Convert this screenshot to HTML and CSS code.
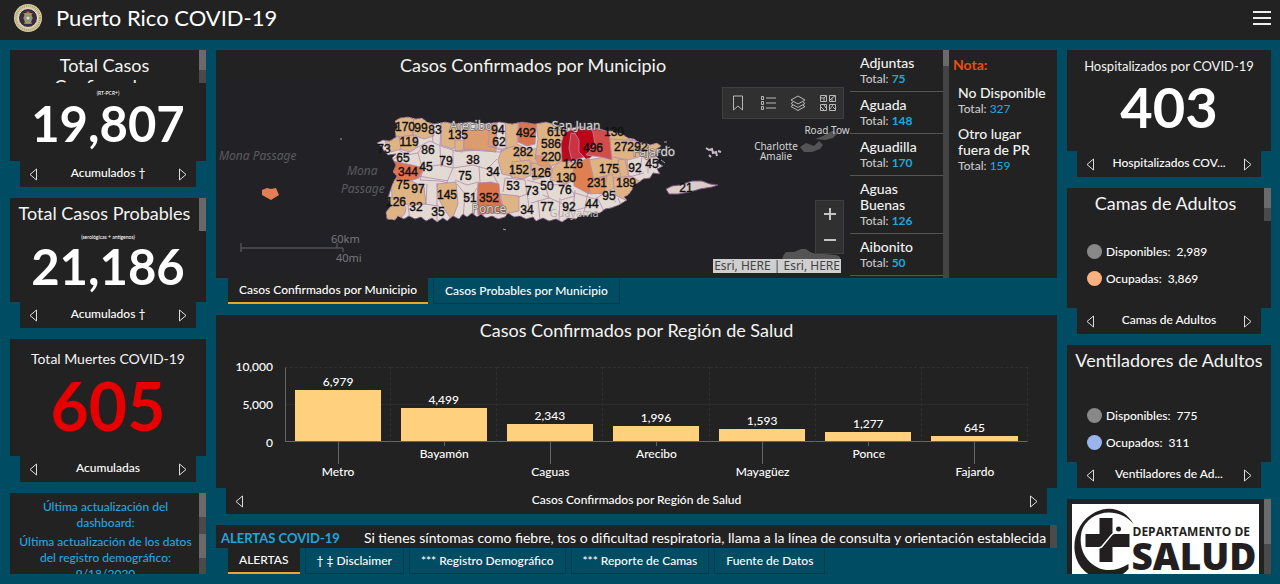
FILE: index.html
```html
<!DOCTYPE html>
<html lang="es">
<head>
<meta charset="utf-8">
<title>Puerto Rico COVID-19</title>
<link rel="stylesheet" href="styles.css">
</head>
<body>
<header class="topbar">
  <svg class="seal" viewBox="0 0 28 28" aria-hidden="true">
    <circle cx="14" cy="14" r="14" fill="#d8cd9e"/>
    <circle cx="14" cy="14" r="12" fill="none" stroke="#a39a76" stroke-width="2" stroke-dasharray="1 1"/>
    <circle cx="14" cy="14" r="9.5" fill="#352c48" stroke="#e6e0c4"/>
    <path d="M9 9l2 2-2 3 2 3-1 3h8l-1-3 2-3-2-3 2-2-3 0-2-2-2 2z" fill="#b5713f"/>
    <path d="M11 10h6v7q-3 4-6 0z" fill="#6f9c84" stroke="#c9a65c" stroke-width=".8"/>
    <circle cx="14" cy="14" r="1.5" fill="#e5ded0"/>
  </svg>
  <h1 class="topbar-title">Puerto Rico COVID-19</h1>
  <button class="menu" type="button" aria-label="Menú"><span></span><span></span><span></span></button>
</header>

<main class="board">
  <div class="stack">
    <section class="widget w-cases">
      <div class="panel">
        <div class="head scrolls"><h2 class="title">Total Casos Confirmados</h2><i class="bar"><b class="thumb"></b></i></div>
        <div class="tiny">(RT-PCR+)</div>
        <div class="figure">19,807</div>
      </div>
      <nav class="pager"><button type="button" aria-label="Anterior"><svg viewBox="0 0 9 13"><path d="M7.500 1v11L1 6.500z"/></svg></button><span>Acumulados †</span><button type="button" aria-label="Siguiente"><svg viewBox="0 0 9 13"><path d="M1.500 1v11L8 6.500z"/></svg></button></nav>
    </section>
    <section class="widget w-probable">
      <div class="panel">
        <div class="head scrolls"><h2 class="title">Total Casos Probables</h2><i class="bar"></i></div>
        <div class="tiny">(serológicas + antígenos)</div>
        <div class="figure">21,186</div>
      </div>
      <nav class="pager"><button type="button" aria-label="Anterior"><svg viewBox="0 0 9 13"><path d="M7.500 1v11L1 6.500z"/></svg></button><span>Acumulados †</span><button type="button" aria-label="Siguiente"><svg viewBox="0 0 9 13"><path d="M1.500 1v11L8 6.500z"/></svg></button></nav>
    </section>
    <section class="widget w-deaths">
      <div class="panel">
        <h2 class="title medium">Total Muertes COVID-19</h2>
        <div class="figure deaths">605</div>
      </div>
      <nav class="pager"><button type="button" aria-label="Anterior"><svg viewBox="0 0 9 13"><path d="M7.500 1v11L1 6.500z"/></svg></button><span>Acumuladas</span><button type="button" aria-label="Siguiente"><svg viewBox="0 0 9 13"><path d="M1.500 1v11L8 6.500z"/></svg></button></nav>
    </section>
    <section class="widget w-update">
      <div class="panel scrolls update">
        <div class="update-text">
          <p>Última actualización del dashboard:</p>
          <p>Última actualización de los datos del registro demográfico: 9/18/2020</p>
        </div>
        <i class="bar two"><b class="thumb"></b><b class="thumb"></b></i>
      </div>
    </section>
  </div>

  <div class="stack">
    <section class="widget w-map">
      <div class="panel mapcard">
        <div class="mapside">
          <h2 class="title maptitle">Casos Confirmados por Municipio</h2>
          <div class="map">
            <svg class="mapsvg" viewBox="216 80 634 198" preserveAspectRatio="xMidYMid slice" role="img" aria-label="Mapa de Puerto Rico">
              <defs>
                <clipPath id="isla"><path id="costa" d="M395 121L400 118L408 117L416 119L422 118L427 122L434 124L445 122L455 124L470 122L480 124L492 123L500 122L512 124L522 122L535 124L546 122L556 125L565 127L572 128L580 126L590 129L598 128L606 131L612 131L622 134L628 138L634 139L640 143L645 142L650 145L657 143L661 146L657 149L660 152L655 155L659 159L656 162L663 166L657 169L660 174L653 173L650 178L643 179L638 183L634 184L632 190L628 195L624 197L627 200L619 205L611 208L605 209L600 213L591 213L588 216L580 215L576 219L568 218L562 222L556 219L549 221L543 218L536 221L533 217L526 219L520 216L514 217L508 213L505 217L498 219L492 216L486 218L481 214L477 217L472 213L467 217L463 214L459 219L453 216L447 221L443 218L437 222L432 218L426 221L421 217L415 219L409 216L404 219L398 216L395 220L387 219L386 212L391 206L388 198L391 188L394 181L397 176L393 172L396 165L392 158L396 154L388 155L384 151L382 147L377 143L383 140L390 141L396 137L395 131L398 127Z"/></clipPath>
              </defs>
              <g fill="#545457">
                <path d="M800 147l6-4 8 3 5-5 4 4-3 4-8 3-8 0z"/><path d="M815 139l8-3 9-5 6 2-5 5-8 2z"/>
                <path d="M783 256l3-4 8 0 7-3 5 0 4 3 6 2 8 0 12 1 4 2v4h-58z"/>
              </g>
              <g clip-path="url(#isla)" stroke="#b08ab0" stroke-width=".8" stroke-linejoin="round">
                <rect x="370" y="110" width="300" height="115" fill="#e4dad4"/>
                <g fill="#dfb485">
                  <path d="M390 114h24l-1 21-12 2-7-2z"/><path d="M414 114h17l3 22-10 3-11-4z"/>
                  <path d="M399 137l14-2 5 12-8 5-11-3z"/><path d="M385 142l14-6 2 13-10 3z"/>
                  <path d="M442 114h20l-2 27-7 8-12-4z"/><path d="M455 140h9l-1 12-8-1z"/>
                  <path d="M505 114h14l-2 30 12 6 15-3 6 12-5 8-30-3-9-15z"/>
                  <path d="M502 149l13-3 6 16-5 15-14-3-4-14z"/><path d="M512 162l18-2 1 15-8 4-12-2z"/><path d="M531 163l20 2 2 10-20 5z"/>
                  <path d="M535 114h31l-3 46-14 8-14-9 3-20z"/>
                  <path d="M561 161l15 2 2 15-12 6-16-4 3-12z"/>
                  <path d="M605 125l32 5-5 11-23 1z"/><path d="M610 139l29 2 3 15-14 4-18-2z"/><path d="M589 160l20-4 18 4-5 20-25 2-9-9z"/><path d="M618 160l9-1 2 18-8 3z"/>
                  <path d="M590 180l22-6 4 13-14 7-15-2z"/><path d="M613 178l18-2 10 6-11 20-15-7z"/><path d="M638 138l25 3-3 15-14 3-7-5z"/>
                  <path d="M391 179l18 1 15 7 2 17-16 2-18-8z"/><path d="M382 197l19 1 5 10-1 5-9 11h-14z"/>
                  <path d="M437 184l19-2 2 22-6 16-8-11-6-12z"/><path d="M500 194l19 2v15l-14 3z"/>
                </g>
                <path d="M464 131l13-2 20-6-1 29-14-2-18 1z" fill="#db9c70"/>
                <path d="M519 114h18l-2 30-8 2-9-4z" fill="#d97650"/>
                <path d="M387 158l6 3 19 4 12 3-5 10-9 3-18-2z" fill="#dc7450"/>
                <path d="M478 183l13-1 8 2 1 14 5 16-14-1-13 2-1-16z" fill="#d8764e"/>
                <path d="M535 155l10 2 7 12-14-4z" fill="#e09965"/>
                <path d="M564 133l7-3 6 2 1 28-16 2-1-18z" fill="#b90b1c"/>
                <path d="M571 133l9 2 5 22-13 4-3-13z" fill="#cc3340"/>
                <path d="M573 130l12-3 10 5 1 21-9 7-8-8 0-12z" fill="#bd0518"/>
                <path d="M592 127l17 5 3 28-11-3-15-2 9-11z" fill="#d24d4a"/>
                <path d="M576 163l13-5 5 22-5 14-15-8-1-14z" fill="#e08050"/>
                <path d="M590 179l17-3-3 17-14 1z" fill="#e39a67"/>
                <g fill="none">
                  <path d="M431 120l2 22M441 122l-1 25M418 147l12-6 13 6 13 4 12-2 14 2 18 1 8-4"/>
                  <path d="M399 150l8 5 11-2 4-7M418 153l4 14 18-2 13 3M440 147l1 20M400 155l-11 7M424 167l-4 13 20 1 8 2M453 150l0 18-6 14M453 168l20-3 14 4 10-10M455 180l12 5 12-3M479 166l1 17M490 168l8 16M490 123l-2 23 16 5"/>
                  <path d="M418 176l30 5M427 184l-1 20M437 183v38M408 206l2 14M425 204l14 2M457 184l8 10-2 24M477 188l-6 10-7 1M505 178l-2 14M505 178l20 2 2 14-8 3M527 192l2 16M527 180l18 5 4 13-18 5M549 185l19-1 7 12-14 4M538 200l2 20M560 198l-1 22M575 190l-2 20M588 192l-4 20M575 193l20 6 10-6M597 197l8 16M604 193l12 9M618 198l4 10M625 160l4 17 15-4M642 157l-3 18M648 158l0 15M543 195l18 8 12 8 14-4M490 146l12 3"/>
                </g>
              </g>
              <use href="#costa" fill="none" stroke="#7e5b86" stroke-width="1" stroke-dasharray="3 1"/>
              <g fill="#d9cdc7" stroke="#7d5485" stroke-width="1">
                <path d="M666 189l6-3 8-1 12-4 10 0 8 3 8 1-6 2-12 2-10 3-12 2-9 0z"/>
                <path d="M706 148l3 2 3-1 1 4 3-1 1 4M718 151l3 1M709 155l2 2" fill="none" stroke="#cbb9c7" stroke-width="2"/>
                <path d="M664 142l3 0M667 148l3-1M661 160l4 3M503 229l3 1M340 139h2" fill="none" stroke="#b39bb0"/>
              </g>
              <path d="M262 190l5-2 4 1 5-1 3 7-8 5-9-5z" fill="#e37d55"/>
              <g class="sea"><text x="219" y="160">Mona Passage</text><text x="347" y="175">Mona</text><text x="341" y="193">Passage</text></g>
              <path d="M241 243v9M241 248h102M337 243v5M343 248v4" fill="none" stroke="#656568"/>
              <g class="scale"><text x="331" y="243">60km</text><text x="336" y="262">40mi</text></g>
              <g class="place"><text x="471" y="130">Arecibo</text><text x="576" y="130">San Juan</text><text x="489" y="213">Ponce</text><text class="faint" x="574" y="217">Guayama</text><text x="654" y="156">Fajardo</text></g>
              <g class="place small"><text x="776" y="150">Charlotte</text><text x="776" y="160">Amalie</text><text x="827" y="134">Road Tow</text></g>
              <g class="count">
                <text x="405" y="131">170</text><text x="421" y="132">99</text><text x="435" y="134">83</text><text x="409" y="146">119</text><text x="428" y="154">86</text><text x="384" y="153">73</text><text x="403" y="162">65</text><text x="408" y="176">344</text><text x="426" y="171">45</text><text x="446" y="165">79</text><text x="458" y="139">135</text><text x="498" y="134">94</text><text x="499" y="146">62</text><text x="526" y="137">492</text><text x="523" y="156">282</text><text x="473" y="164">38</text><text x="493" y="176">34</text><text x="465" y="180">75</text><text x="519" y="174">152</text><text x="541" y="177">126</text><text x="403" y="189">75</text><text x="418" y="193">97</text><text x="447" y="199">145</text><text x="470" y="202">51</text><text x="489" y="202">352</text><text x="513" y="190">53</text><text x="532" y="195">73</text><text x="547" y="190">50</text><text x="396" y="206">126</text><text x="416" y="211">32</text><text x="438" y="216">35</text><text x="527" y="214">34</text><text x="547" y="211">77</text><text x="569" y="211">92</text><text x="592" y="208">44</text><text x="609" y="200">95</text><text x="557" y="136">616</text><text x="551" y="148">586</text><text x="551" y="161">220</text><text x="573" y="168">126</text><text x="593" y="152">496</text><text x="614" y="136">130</text><text x="624" y="151">272</text><text x="641" y="151">92</text><text x="609" y="173">175</text><text x="635" y="172">92</text><text x="652" y="168">45</text><text x="566" y="182">130</text><text x="597" y="187">231</text><text x="626" y="187">189</text><text x="565" y="194">76</text><text x="686" y="192">21</text>
              </g>
            </svg>
            <div class="tools">
              <button type="button" aria-label="Marcadores"><svg viewBox="0 0 16 16"><path d="M3.500 1h9v14L8 11l-4.500 4z"/></svg></button>
              <button type="button" aria-label="Leyenda"><svg viewBox="0 0 16 16"><path d="M6 3h10M6 8h10M6 13h10M1.500 1.500h2v3h-2zM1.500 6.500h2v3h-2zM1.500 11.500h2v3h-2z"/></svg></button>
              <button type="button" aria-label="Capas"><svg viewBox="0 0 16 16"><path d="M8 1l7 4-7 4-7-4zM3 7.300L1 8.500l7 4 7-4-2-1.200M3 10.300l-2 1.200 7 4 7-4-2-1.200"/></svg></button>
              <button type="button" aria-label="Mapas base"><svg viewBox="0 0 16 16"><path d="M.5.5h6v6h-6zM9.500.5h6v6h-6zM.5 9.500h6v6h-6zM9.500 9.500h6v6h-6zM1 3l3 0 0 3M6 1L4 3M10 5l2-2 3-2M12 3v3M1 12l3 3M4 10l2 3M10 14l3-4M13 12l2 2"/></svg></button>
            </div>
            <div class="zoom"><button type="button" aria-label="Acercar"><svg viewBox="0 0 14 14"><path d="M7 1v12M1 7h12"/></svg></button><button type="button" aria-label="Alejar"><svg viewBox="0 0 14 14"><path d="M1 7h12"/></svg></button></div>
            <div class="credit">Esri, HERE | Esri, HERE</div>
          </div>
        </div>
        <div class="towns">
          <ul>
            <li><h3>Adjuntas</h3><p>Total: <b>75</b></p></li>
            <li><h3>Aguada</h3><p>Total: <b>148</b></p></li>
            <li><h3>Aguadilla</h3><p>Total: <b>170</b></p></li>
            <li><h3>Aguas Buenas</h3><p>Total: <b>126</b></p></li>
            <li><h3>Aibonito</h3><p>Total: <b>50</b></p></li>
          </ul>
          <i class="track"><b class="thumb"></b></i>
        </div>
        <div class="notes">
          <h3 class="nota">Nota:</h3>
          <ul>
            <li><h3>No Disponible</h3><p>Total: <em>327</em></p></li>
            <li><h3>Otro lugar fuera de PR</h3><p>Total: <em>159</em></p></li>
          </ul>
        </div>
      </div>
      <nav class="tabs"><button class="on" type="button">Casos Confirmados por Municipio</button><button type="button">Casos Probables por Municipio</button></nav>
    </section>

    <section class="widget w-chart">
      <div class="panel chartcard">
        <h2 class="title">Casos Confirmados por Región de Salud</h2>
        <div class="chart">
          <div class="yaxis"><span>10,000</span><span>5,000</span><span>0</span></div>
          <div class="plot">
            <div class="col"><div class="well"><span>6,979</span><div class="fill" style="height:69.79%"></div></div><div class="cat">Metro</div></div>
            <div class="col"><div class="well"><span>4,499</span><div class="fill" style="height:44.99%"></div></div><div class="cat">Bayamón</div></div>
            <div class="col"><div class="well"><span>2,343</span><div class="fill" style="height:23.43%"></div></div><div class="cat">Caguas</div></div>
            <div class="col"><div class="well"><span>1,996</span><div class="fill" style="height:19.96%"></div></div><div class="cat">Arecibo</div></div>
            <div class="col"><div class="well"><span>1,593</span><div class="fill" style="height:15.93%"></div></div><div class="cat">Mayagüez</div></div>
            <div class="col"><div class="well"><span>1,277</span><div class="fill" style="height:12.77%"></div></div><div class="cat">Ponce</div></div>
            <div class="col"><div class="well"><span>645</span><div class="fill" style="height:6.45%"></div></div><div class="cat">Fajardo</div></div>
          </div>
        </div>
      </div>
      <nav class="pager"><button type="button" aria-label="Anterior"><svg viewBox="0 0 9 13"><path d="M7.500 1v11L1 6.500z"/></svg></button><span>Casos Confirmados por Región de Salud</span><button type="button" aria-label="Siguiente"><svg viewBox="0 0 9 13"><path d="M1.500 1v11L8 6.500z"/></svg></button></nav>
    </section>

    <section class="widget w-alert">
      <div class="panel scrolls alert"><strong>ALERTAS COVID-19</strong><span>Si tienes síntomas como fiebre, tos o dificultad respiratoria, llama a la línea de consulta y orientación establecida</span><i class="bar"></i></div>
      <nav class="tabs"><button class="on" type="button">ALERTAS</button><button type="button">† ‡ Disclaimer</button><button type="button">*** Registro Demográfico</button><button type="button">*** Reporte de Camas</button><button type="button">Fuente de Datos</button></nav>
    </section>
  </div>

  <div class="stack">
    <section class="widget w-hospital">
      <div class="panel">
        <h2 class="title little">Hospitalizados por COVID-19</h2>
        <div class="figure hospital">403</div>
      </div>
      <nav class="pager"><button type="button" aria-label="Anterior"><svg viewBox="0 0 9 13"><path d="M7.500 1v11L1 6.500z"/></svg></button><span>Hospitalizados COV...</span><button type="button" aria-label="Siguiente"><svg viewBox="0 0 9 13"><path d="M1.500 1v11L8 6.500z"/></svg></button></nav>
    </section>
    <section class="widget w-beds">
      <div class="panel">
        <div class="head scrolls"><h2 class="title">Camas de Adultos</h2><i class="bar"><b class="thumb"></b></i></div>
        <ul class="legend"><li><i class="dot"></i>Disponibles:&ensp;2,989</li><li><i class="dot peach"></i>Ocupadas:&ensp;3,869</li></ul>
      </div>
      <nav class="pager"><button type="button" aria-label="Anterior"><svg viewBox="0 0 9 13"><path d="M7.500 1v11L1 6.500z"/></svg></button><span>Camas de Adultos</span><button type="button" aria-label="Siguiente"><svg viewBox="0 0 9 13"><path d="M1.500 1v11L8 6.500z"/></svg></button></nav>
    </section>
    <section class="widget w-vents">
      <div class="panel">
        <div class="head"><h2 class="title">Ventiladores de Adultos</h2></div>
        <ul class="legend"><li><i class="dot"></i>Disponibles:&ensp;775</li><li><i class="dot blue"></i>Ocupados:&ensp;311</li></ul>
      </div>
      <nav class="pager"><button type="button" aria-label="Anterior"><svg viewBox="0 0 9 13"><path d="M7.500 1v11L1 6.500z"/></svg></button><span>Ventiladores de Ad...</span><button type="button" aria-label="Siguiente"><svg viewBox="0 0 9 13"><path d="M1.500 1v11L8 6.500z"/></svg></button></nav>
    </section>
    <section class="widget w-logo">
      <div class="panel scrolls logo">
        <svg viewBox="0 0 188 70" preserveAspectRatio="xMidYMin slice" role="img" aria-label="Departamento de Salud">
          <rect width="188" height="90" fill="#fff"/>
          <path d="M62 20C54 5 38 1 24 8C6 17-1 38 5 55C9 66 18 73 30 75C42 77 52 71 57 65V60C48 66 36 68 27 64C12 57 7 42 10 28C15 8 45 0 62 20z" fill="#231f20"/>
          <path d="M28 14h13v16h17v13H41v15H28V43H14V30h14z" fill="#231f20"/>
          <path d="M16 48L30 43 40 31 47 26" fill="none" stroke="#fff" stroke-width="1.500"/>
          <circle cx="47" cy="25" r="2.500" fill="#231f20"/>
          <text class="dep" x="61" y="32">DEPARTAMENTO DE</text>
          <text class="salud" x="60" y="66">SALUD</text>
        </svg>
        <i class="bar"><b class="thumb"></b></i>
      </div>
    </section>
  </div>
</main>
</body>
</html>
```

FILE: styles.css
```css
* { box-sizing: border-box; }
body {
  margin: 0;
  height: 100vh;
  min-height: 560px;
  display: flex;
  flex-direction: column;
  background: #004c63;
  color: #fff;
  font: 500 12px/16px Lato, "Open Sans", sans-serif;
}
h1, h2, h3, p, ul { margin: 0; padding: 0; font-weight: 500; list-style: none; }
h1, .title { font-weight: 400; }
button { font: inherit; color: inherit; background: none; border: 0; padding: 0; cursor: pointer; }

.topbar { display: flex; align-items: center; height: 40px; flex: none; padding: 0 9px 4px 14px; background: #222; }
.seal { width: 28px; height: 28px; }
.topbar-title { flex: 1; margin-left: 14px; font-size: 22px; line-height: 28px; }
.menu { display: grid; gap: 4px; width: 18px; }
.menu span { height: 2px; background: #eee; }

.board { flex: 1; min-height: 0; display: grid; grid-template-columns: 196px minmax(0, 1fr) 204px; gap: 10px; padding: 10px 9px 10px 10px; }
.stack { display: flex; flex-direction: column; gap: 11px; min-height: 0; min-width: 0; }
.widget { display: flex; flex-direction: column; min-height: 0; flex: 1 1 0; }
.w-cases { flex-grow: 137; }
.w-probable { flex-grow: 130; }
.w-deaths { flex-grow: 143; }
.w-update { flex-grow: 81; }
.w-map { flex-grow: 254; }
.w-chart { flex-grow: 199; }
.w-alert { flex-grow: 49; }
.w-hospital { flex-grow: 127; }
.w-beds { flex-grow: 146; }
.w-vents { flex-grow: 143; }
.w-logo { flex-grow: 75; }

.panel { flex: 1; min-height: 0; overflow: hidden; background: #222; text-align: center; }
.title { font-size: 18px; line-height: 21px; color: #f4f4f4; }
.title.medium { font-size: 14px; padding-top: 9px; }
.title.little { font-size: 13px; padding-top: 6px; }
.head { height: 33px; overflow: hidden; padding: 5px 7px 0; }
.head.scrolls { padding-right: 14px; }
.scrolls { position: relative; }
.bar { position: absolute; top: 0; right: 0; width: 7px; height: 100%; background: #4a4a4a; }
.thumb { display: block; height: 60%; background: #6a6a6a; }
.w-probable .bar { background: #686868; }
.tiny { height: 15px; padding-top: 5px; font-size: 5px; line-height: 10px; }
.w-probable .tiny { height: 10px; padding-top: 1px; }
.figure { font-size: 49px; line-height: 50px; font-weight: 700; }
.figure.deaths { font-size: 66px; line-height: 74px; color: #e60000; }
.figure.hospital { font-size: 56px; line-height: 60px; }

.pager { display: flex; align-items: center; justify-content: space-between; height: 26px; flex: none; margin: 0 10px; padding: 0 9px; background: #222; }
.pager span { padding-bottom: 3px; }
.pager svg { display: block; width: 9px; height: 13px; fill: none; stroke: #ddd; }

.update-text { padding: 6px 14px 0 9px; color: #22a7e0; }
.update-text p + p { margin-top: 3px; }
.bar.two { display: grid; grid-template-rows: 1fr 1fr; }

.mapcard { display: flex; }
.mapside { flex: 1; min-width: 0; display: flex; flex-direction: column; }
.maptitle { height: 30px; padding-top: 5px; flex: none; }
.map { position: relative; flex: 1; min-height: 0; background: #222226; }
.mapsvg { display: block; width: 100%; height: 100%; }
.sea { font: italic 12px "Noto Sans", sans-serif; fill: #5a5a5e; }
.scale { font: 11px "Noto Sans", sans-serif; fill: #77777a; }
.place { font: 12px "Noto Sans", sans-serif; text-anchor: middle; fill: #d4d4d4; paint-order: stroke; stroke: #555; stroke-width: 1px; }
.faint { fill: #b5b0ae; font-size: 11px; stroke: none; }
.place.small { font-size: 10px; stroke: none; }
.count { font: 12px "Liberation Sans", Arial, sans-serif; text-anchor: middle; fill: #111; stroke: #111; stroke-width: .4px; }
.tools { position: absolute; top: 7px; right: 6px; display: flex; height: 32px; background: #303030; border: 1px solid #3f3f3f; }
.tools button { display: grid; place-items: center; width: 30px; }
.tools svg { width: 16px; height: 16px; fill: none; stroke: #b8b8b8; }
.zoom { position: absolute; right: 6px; bottom: 24px; display: grid; grid-template-rows: 1fr 1fr; width: 29px; height: 54px; background: #303030; border: 1px solid #3f3f3f; }
.zoom button { display: grid; place-items: center; }
.zoom svg { width: 14px; height: 14px; stroke: #c4c4c4; stroke-width: 2; }
.credit { position: absolute; right: 9px; bottom: 5px; height: 14px; padding: 0 1px; background: #cfcfcf; color: #444; font: 12px/14px "Noto Sans", sans-serif; }

.towns { display: flex; width: 99px; text-align: left; }
.towns ul { flex: 1; }
.towns li { padding: 5px 10px; border-bottom: 1px solid #555; }
.towns h3, .notes li h3 { font-size: 14px; line-height: 16px; color: #f2f2f2; }
.towns p, .notes p { font-size: 12px; line-height: 15px; color: #c8c8c8; }
.towns b { color: #1ea7dc; }
.track { width: 6px; background: #444; }
.track .thumb { height: 16px; }
.notes { width: 108px; padding: 7px 4px 0; text-align: left; }
.nota { font-size: 14px; line-height: 16px; font-weight: 700; color: #e8500e; }
.notes li { padding: 5px; }
.notes ul { padding-top: 7px; }
.notes em { font-style: normal; color: #1ea7dc; }

.tabs { display: flex; gap: 5px; height: 26px; flex: none; padding-left: 12px; }
.tabs button { padding: 0 11px; border: 1px solid #073b4c; border-top: 0; }
.tabs .on { background: #222; border: 0; border-bottom: 2px solid #e2a92c; }

.chartcard { display: flex; flex-direction: column; padding-top: 5px; }
.chart { flex: 1; display: flex; min-height: 0; padding: 26px 29px 0 0; }
.yaxis { display: flex; flex-direction: column; justify-content: space-between; width: 57px; height: 92px; margin: -8px 12px 0 0; text-align: right; }
.plot { flex: 1; display: flex; min-width: 0; }
.col { flex: 1; display: flex; flex-direction: column; }
.well { height: 75px; display: flex; flex-direction: column; align-items: center; justify-content: flex-end; border-top: 1px dashed #303030; border-right: 1px dashed #303030; border-bottom: 1px solid #666; background: linear-gradient(#2c2c2c, #2c2c2c) 0 50% / 100% 1px no-repeat; }
.col:first-child .well { border-left: 1px solid #666; }
.fill { width: 82%; flex: none; background: #ffd17f; }
.cat::before { content: ""; display: block; width: 1px; height: 4px; margin: 0 auto; background: #666; }
.col:nth-child(odd) .cat::before { height: 22px; }

.alert { display: flex; align-items: center; gap: 24px; padding: 3px 7px 0 5px; font-size: 14px; font-weight: 400; white-space: nowrap; }
.alert strong { font-size: 13px; color: #1ea7dc; }

.legend { padding: 17px 20px 0; text-align: left; }
.w-vents .legend { padding-top: 24px; }
.legend li { display: flex; align-items: center; height: 27px; }
.dot { width: 15px; height: 15px; margin-right: 4px; border-radius: 50%; background: #888; }
.dot.peach { background: #fbb07f; }
.dot.blue { background: #9ab4ee; }

.logo { padding: 5px 12px 0 5px; }
.logo svg { display: block; width: 100%; height: 100%; }
.dep { font: 700 12px "Open Sans", sans-serif; fill: #231f20; }
.salud { font: 800 37px "Open Sans", sans-serif; fill: #231f20; }
```
